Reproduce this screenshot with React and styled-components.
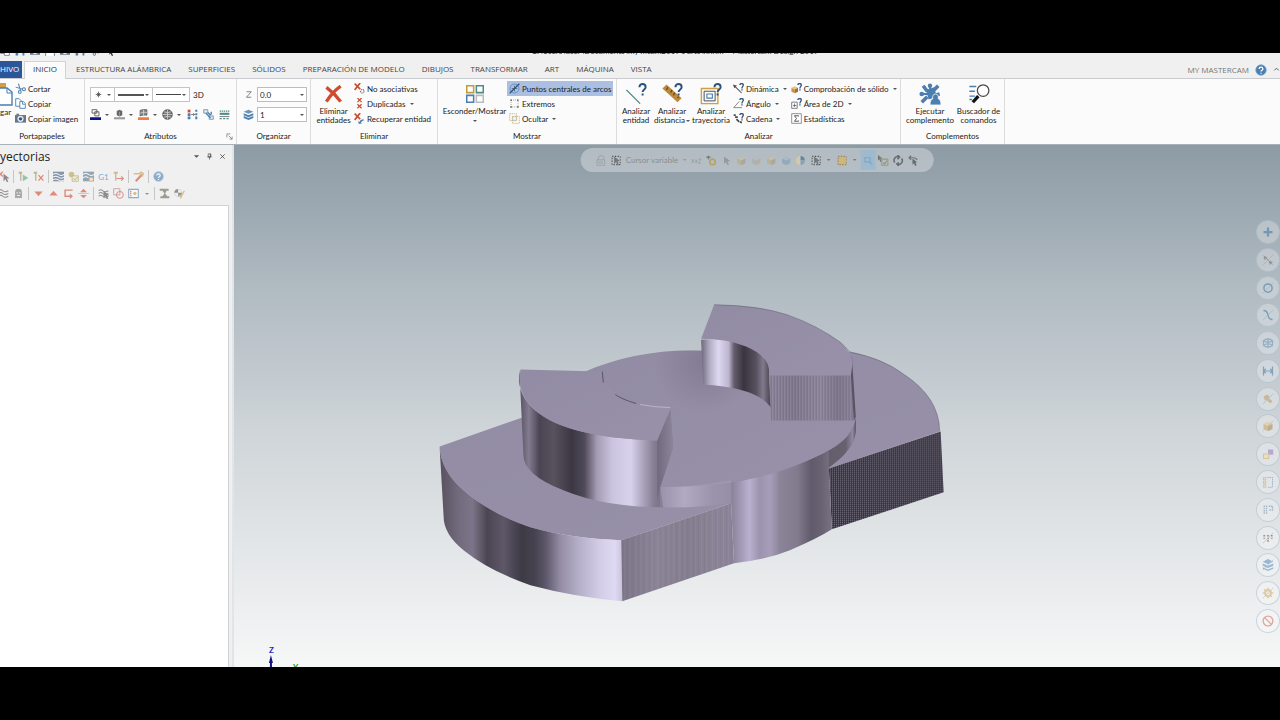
import React from 'react'
import styled, { createGlobalStyle } from 'styled-components'

const GlobalStyle = createGlobalStyle`
    * {
        box-sizing: border-box;
    }
    html, body {
        margin: 0;
        background: #000;
    }
    body, button, select {
        font-family: Lato, 'Open Sans', sans-serif;
        font-size: 8px;
        line-height: 10px;
        color: #222;
    }
    button {
        border: 0;
        padding: 0;
        margin: 0;
        background: none;
        white-space: nowrap;
    }
    svg {
        display: block;
        flex: none;
    }
`

const Screen = styled.div`
    display: flex;
    flex-direction: column;
    height: 100vh;
    padding: 53px 0;
    overflow: hidden;
`

const TitleBar = styled.header`
    position: relative;
    display: flex;
    justify-content: center;
    height: 8px;
    padding-left: 70px;
    background: #f0f0f0;
`

const TitleText = styled.div`
    display: flex;
    align-items: flex-end;
    height: 3px;
    overflow: hidden;
    white-space: pre;
`

const QuickAccess = styled.div`
    position: absolute;
    left: 0;
    top: 0;
    display: flex;
    align-items: flex-end;
    gap: 5px;
    height: 3px;
    overflow: hidden;
`

const TabBar = styled.nav`
    display: flex;
    align-items: stretch;
    height: 18px;
    background: #f0f0f0;
    border-bottom: 1px solid #c9cbcf;
`

const Tab = styled.button`
    margin-right: 1px;
    padding: 0 8px 1px;
    font-family: 'Open Sans', 'Noto Sans', sans-serif;
    color: #444;
`

const FileTab = styled(Tab)`
    width: 22px;
    margin-right: 2px;
    padding: 0 4px 1px 0;
    text-align: right;
    color: #fff;
    background: #2a579a;
`

const ActiveTab = styled(Tab)`
    margin: 0 2px -1px 0;
    padding-bottom: 3px;
    border: 1px solid #d0d2d6;
    border-bottom: 0;
    background: #fbfbfb;
    color: #333;
`

const TabTools = styled.div`
    display: flex;
    align-items: center;
    gap: 6px;
    margin-left: auto;
    font-family: 'Open Sans', 'Noto Sans', sans-serif;
    color: #777;
`

const RibbonBar = styled.div`
    display: flex;
    height: 66px;
    background: #fbfbfb;
    border-bottom: 1px solid #a9b1b9;
`

const Group = styled.section`
    display: flex;
    flex-direction: column;
    flex: 0 0 ${({ $width }) => $width}px;
    border-right: 1px solid #dcdcdc;
`

const GroupBody = styled.div`
    display: flex;
    flex: 1;
    padding: ${({ $pad }) => $pad || '2px 2px 0 4px'};
`

const GroupTitle = styled.div`
    position: relative;
    height: 13px;
    text-align: center;
`

const Launcher = styled.button`
    position: absolute;
    right: 3px;
    top: 2px;
`

const Column = styled.div`
    display: flex;
    flex-direction: column;
    align-items: flex-start;
`

const SmallButton = styled.button`
    display: flex;
    align-items: center;
    gap: 2px;
    height: 15px;
    padding: 0 2px;
    background: ${({ $active }) => $active ? '#aabfe2' : 'none'};
`

const BigButton = styled.button`
    display: flex;
    flex-direction: column;
    align-items: center;
    flex: 0 0 ${({ $width }) => $width}px;
    height: 46px;
    line-height: 9px;
`

const BigIcon = styled.span`
    display: flex;
    align-items: center;
    justify-content: center;
    height: 26px;
`

const BigLine = styled.span`
    display: flex;
    align-items: center;
    gap: 1px;
    min-height: 9px;
`

const StyleRow = styled.div`
    display: flex;
    align-items: center;
    height: 15px;
    margin-bottom: 7px;
`

const StyleBox = styled.button`
    display: flex;
    align-items: center;
    justify-content: space-between;
    width: ${({ $width }) => $width}px;
    height: 15px;
    margin-right: -1px;
    padding: 0 3px;
    border: 1px solid #c4c4c4;
    background: #fff;
`

const Swatches = styled.div`
    display: flex;
    align-items: center;
    justify-content: space-between;
    width: 140px;
`

const Swatch = styled.button`
    display: flex;
    align-items: center;
    gap: 4px;
`

const Field = styled.label`
    position: relative;
    display: flex;
    align-items: center;
    gap: 3px;
    margin-bottom: 5px;
`

const Select = styled.select`
    appearance: none;
    width: 50px;
    height: 15px;
    padding: 0 2px;
    border: 1px solid #bdbdbd;
    border-radius: 0;
    background: #fff;
`

const FieldCaret = styled.span`
    position: absolute;
    right: 3px;
`

const Workspace = styled.main`
    display: flex;
    flex: 1;
    min-height: 0;
    background: #f0f0f0;
`

const Panel = styled.aside`
    display: flex;
    flex-direction: column;
    flex: 0 0 234px;
    border-right: 2px solid #e2e5e8;
`

const PanelHeader = styled.div`
    display: flex;
    align-items: center;
    height: 23px;
    padding-right: 6px;
    gap: 6px;
`

const PanelTitle = styled.h1`
    margin: 0 auto 0 0;
    font-family: 'Open Sans', 'Noto Sans', sans-serif;
    font-size: 12px;
    line-height: 16px;
    font-weight: 400;
`

const PanelTools = styled.div`
    display: flex;
    align-items: center;
    height: 17px;
    margin-left: -4px;
    opacity: 0.6;
`

const ToolButton = styled.button`
    display: flex;
    align-items: center;
    justify-content: center;
    width: ${({ $slim }) => $slim ? 11 : 15}px;
    height: ${({ $active }) => $active ? 20 : 14}px;
    background: ${({ $active }) => $active ? '#8fb9d6' : 'none'};
`

const Divider = styled.span`
    width: 1px;
    height: 13px;
    margin: 0 2px;
    background: #aaa;
`

const TreeView = styled.div`
    flex: 1;
    margin: 3px 3px 0 0;
    border: 1px solid #cfd3d6;
    border-left: 0;
    border-bottom: 0;
    background: #fff;
`

const Viewport = styled.section`
    position: relative;
    flex: 1;
    min-width: 0;
    overflow: hidden;
    background: linear-gradient(#8d9ba5 0%, #b1bbc2 28%, #cdd3d7 53%, #e4e7e9 78%, #f6f7f7 100%);
`

const Scene = styled.svg`
    width: 100%;
    height: 100%;
`

const SelectionBar = styled.div`
    position: absolute;
    top: 3px;
    left: 50%;
    display: flex;
    align-items: center;
    height: 24px;
    padding: 0 13px;
    border-radius: 12px;
    background: rgba(255, 255, 255, 0.32);
    transform: translateX(-50%);
`

const SelectionTools = styled.div`
    display: flex;
    align-items: center;
    opacity: ${({ $faded }) => $faded ? 0.3 : 0.6};
`

const QuickMasks = styled.div`
    position: absolute;
    top: 75px;
    right: 0;
    bottom: 34px;
    display: flex;
    flex-direction: column;
    justify-content: space-between;
`

const MaskButton = styled.button`
    display: flex;
    align-items: center;
    justify-content: center;
    width: 24px;
    height: 24px;
    border: 1px solid rgba(150, 175, 192, 0.45);
    border-radius: 12px;
    background: rgba(255, 255, 255, 0.28);
    & > svg {
        opacity: 0.45;
    }
`

const BLUE = '#4a7fb0'
const RED = '#cf4b2f'
const GOLD = '#d0a040'
const DARK = '#4a4a4a'
const TEAL = '#4e8a86'

const cursor = <path d="M5 2v11l3-3 2 5 2-1-2-5h4z" fill={DARK} />
const question = (
    <g fill="none" stroke="#35577f" strokeWidth="2">
        <path d="M10 3c0-3 5-3 5 0 0 2-2 2-2 5" />
        <path d="M13 9v2" />
    </g>
)
const bigQuestion = <path d="M10.500 3c0-3 4.500-3 4.500 0 0 1.700-2.200 1.700-2.200 3.600M12.800 7.600v1.400" fill="none" stroke="#2d4f7d" strokeWidth="1.400" />
const slash = <path d="M1 15 15 1" stroke="#8593a0" />
const cube = (
    <g>
        <path d="M2 5l6-3 6 3-6 3z" fill="#e8c27a" />
        <path d="M2 5l6 3v7l-6-3z" fill="#c69443" />
        <path d="M14 5l-6 3v7l6-3z" fill="#9f7130" />
    </g>
)
const waves = <path d="M1 4q3-3 6 0t8 0M1 8q3-3 6 0t8 0M1 12q3-3 6 0t8 0" fill="none" stroke={DARK} strokeWidth="1.5" />

const shapes = {
    cut: <g fill="none" stroke={BLUE} strokeWidth="1.5"><circle cx="13" cy="9" r="2.2" /><circle cx="7" cy="13" r="2" /><path d="M11 9 1 6M8 11 5 1" /></g>,
    copy: <g fill="#fff" stroke={BLUE} strokeWidth="1.3"><path d="M1 1h5l3 3v8H1z" /><path d="M7 5h5l3 3v7H7z" /><path d="M11 5v4h4" /></g>,
    camera: <g><path d="M0 3h16v11H0z" fill="#66758a" /><path d="M2 1h4v2H2z" fill="#777" /><circle cx="8" cy="8.5" r="4.5" fill="#dfe8f0" /><circle cx="8" cy="8.5" r="2.5" fill="#34587e" /></g>,
    paste: <g><path d="M0 0h9v5H0z" fill={GOLD} /><path d="M1 5h9l5 4v13H1z" fill="#fff" stroke={BLUE} strokeWidth="1.4" /><path d="M10 5v5h5" fill="none" stroke={BLUE} /></g>,
    plus: <path d="M8 3v10M3 8h10M5 5l6 6M11 5l-6 6" stroke="#333" strokeWidth="1.2" />,
    wire: <g><path d="M3 1h7v5H3zM7 4h6v6H7z" fill="#fff" stroke={DARK} strokeWidth="1.2" /><path d="M0 12h16v4H0z" fill="#10108a" /></g>,
    solid: <g><path d="M4 3l4-2 4 2v6l-4 2-4-2z" fill="#666" /><path d="M8 4v7" stroke="#aaa" /><path d="M0 12h16v3H0z" fill="#999" /></g>,
    surface: <g><path d="M3 2q4-2 10-1v8q-6-1-10 1z" fill="#888" stroke="#555" /><path d="M3 6q4-2 10-1M8 1v8" stroke="#ddd" fill="none" /><path d="M0 12h16v4H0z" fill="#ec7c4a" /></g>,
    sphere: <g><circle cx="8" cy="8" r="7" fill="#777" stroke="#333" /><path d="M1 8h14M8 1v14M3 4q5 3 10 0M3 12q5-3 10 0" fill="none" stroke="#ddd" /></g>,
    levels: <g><path d="M1 1h4v4H1z" fill={RED} /><path d="M1 6h4v4H1zM1 11h4v4H1zM12 1h3v3h-3zM12 6h3v3h-3zM12 11h3v4h-3z" fill={BLUE} /><path d="M6 8h5M9 6l2 2-2 2" stroke={DARK} fill="none" /></g>,
    swap: <g><path d="M1 1h6v5H1zM9 10h6v5H9z" fill="#dfe9f3" stroke={BLUE} /><path d="M4 6l7 7M12 4v4M7 5l4 4" stroke={BLUE} strokeWidth="2" /></g>,
    lines: <g stroke={TEAL}><path d="M1 3h14" strokeDasharray="2 1" strokeWidth="2" /><path d="M1 7h14" strokeWidth="3" /><path d="M1 11h14" stroke={DARK} /><path d="M1 14h14" strokeDasharray="3 2" strokeWidth="2" /></g>,
    launcher: <path d="M2 10V2h8M6 6l8 8M14 8v6H8" fill="none" stroke="#666" strokeWidth="1.5" />,
    zed: <path d="M5 4h7l-7 8h7" fill="none" stroke="#777" strokeWidth="1.3" />,
    layers: <g><path d="M8 1l7 3-7 3-7-3z" fill="#6b94bd" /><path d="M1 6l7 3 7-3v3l-7 3-7-3zM1 10l7 3 7-3v3l-7 3-7-3z" fill={BLUE} /></g>,
    bigX: <path d="M2 2q7 5 12 12M14 1Q7 6 2 14" fill="none" stroke={RED} strokeWidth="2.8" />,
    delGear: <g><path d="M1 1l8 8M9 0L1 10" stroke={RED} strokeWidth="2.4" /><circle cx="12" cy="12" r="2.6" fill="none" stroke="#777" strokeWidth="1.6" strokeDasharray="2 1" /></g>,
    delTwice: <path d="M5 0l6 6M11 0L5 6M5 9l6 6M11 9l-6 6" stroke={RED} strokeWidth="1.8" />,
    undel: <g><path d="M1 1l8 8M9 0L1 10" stroke={RED} strokeWidth="2.4" /><path d="M14 9q-5 0-6 4l-2-1 1 4 5-1-2-1q1-2 4-3z" fill={BLUE} /></g>,
    fourBoxes: <g fill="#fff" strokeWidth="1.1"><path d="M2 2h5v5H2z" stroke="#c39a3c" /><path d="M9 2h5v5H9z" stroke={TEAL} /><path d="M2 9h5v5H2z" stroke={BLUE} /><path d="M9 9h5v5H9z" stroke="#bbb" /></g>,
    arcCenter: <g fill="none" stroke="#32506e"><circle cx="8" cy="8" r="6.5" stroke={BLUE} /><path d="M1 15 15 1" strokeWidth="1.800" /><path d="M8 4v8M4 8h8" /></g>,
    ends: <g><path d="M3 3h10v10H3z" fill="none" stroke={DARK} strokeDasharray="1 2" /><path d="M2 2h2v2H2zM12 2h2v2h-2zM2 12h2v2H2zM12 12h2v2h-2z" fill={DARK} /></g>,
    hide: <g fill="none" stroke={GOLD} strokeDasharray="2 1"><path d="M1 1h10v10H1z" /><path d="M5 5h10v10H5z" /><path d="M5 5h6v6H5z" fill="#eee" stroke="#8aa" /></g>,
    entity: <g><path d="M1 5l10 10" stroke={TEAL} strokeWidth="1" />{bigQuestion}</g>,
    ruler: <g><path d="M1 4l3-3 11 10-3 3z" fill="#bb8a3e" /><path d="M5 3L4 5M8 5L7 7M10 7L9 9M13 10l-1 1" stroke="#6d4e1d" />{bigQuestion}</g>,
    contour: <g fill="none"><path d="M1 4h12v11H1z" stroke={GOLD} /><path d="M3 6h8v7H3z" stroke={DARK} strokeWidth=".7" /><path d="M5 8h4v3H5z" stroke={BLUE} strokeWidth=".8" />{bigQuestion}</g>,
    dynamic: <g><path d="M0 2l6 2-2 1 9 9-1 1-9-9-1 2z" fill={DARK} />{question}</g>,
    angle: <g><path d="M9 5L1 14h12" fill="none" stroke="#777" strokeWidth="1.200" />{question}</g>,
    chain: <g><path d="M1 3l3 0M3 6l4 0M5 9l4 4M10 13l3 1" stroke={DARK} strokeWidth="2.500" fill="none" />{question}</g>,
    solidCheck: <g><g transform="translate(-1 3) scale(.8)">{cube}</g>{question}</g>,
    area: <g><path d="M1 6h8v9H1z" fill="#fff" stroke={DARK} /><path d="M5 8v5M3 11h5" stroke={DARK} />{question}</g>,
    sigma: <g><path d="M1 1h14v14H1z" fill="#fff" stroke="#567" /><path d="M11 5V4H5l3 4-3 4h6v-1" fill="none" stroke={DARK} strokeWidth="1.300" /></g>,
    puzzle: (
        <g fill={BLUE}>
            <path d="M5 5l6-2 2 7-6 2z" />
            <path d="M6 6L3 2M11 5l3-3M6 10l-4 4M11 9l4-1" stroke={BLUE} strokeWidth="2.600" />
            <circle cx="8" cy="2" r="1.600" />
            <circle cx="2" cy="8" r="1.700" />
            <path d="M2 7.300h5v1.400H2zM7.300 2h1.400v4H7.300z" />
            <path d="M8 16q0-4 2-4.500Q9.500 8 12 8t2 3.500q2 .500 2 4.500z" stroke="#fbfbfb" strokeWidth=".6" />
        </g>
    ),
    finder: <g><circle cx="11" cy="5.500" r="4.200" fill="#fff" stroke={DARK} strokeWidth=".9" /><path d="M7.500 9.500L3.500 14" stroke="#111" strokeWidth="2.400" /><path d="M1 2.500h5M1 6h4M1 9.500h4M1 12h2" stroke={BLUE} /></g>,
    help: <g><circle cx="8" cy="8" r="7" fill={BLUE} stroke="#7fa3c7" /><path d="M5.500 6.500c0-3 5-3 5 0 0 2-2.500 1.500-2.500 3.500M8 11.500v1.500" fill="none" stroke="#fff" strokeWidth="1.700" /></g>,
    up: <path d="M3 10l5-5 5 5" fill="none" stroke={DARK} strokeWidth="2" />,
    menu: <path d="M2 5h12l-6 6z" fill="#555" />,
    pin: <path d="M5 2h6v7H5zM3 9h10M8 9v6M10 2v7" fill="none" stroke="#444" strokeWidth="1.500" />,
    close: <path d="M3 3l10 10M13 3L3 13" stroke="#444" strokeWidth="1.800" />,
    deselect: <g><path d="M0 1l7 7M7 1L0 8" stroke={RED} strokeWidth="2" /><g transform="translate(3 2)">{cursor}</g></g>,
    toolPlay: <g><path d="M1 1h5v3H5v10H3V4H1z" fill="#999164" /><path d="M7 5l8 5-8 5z" fill="#58a77a" /></g>,
    toolX: <g><path d="M1 1h5v3H5v10H3V4H1z" fill="#999164" /><path d="M8 6l7 8M15 6l-7 8" stroke={RED} strokeWidth="2" /></g>,
    waveFill: <g><path d="M0 1h16v14H0z" fill="#3e5d7c" /><path d="M0 5q4-3 8 0t8 0M0 9q4-3 8 0t8 0M0 13q4-3 8 0t8 0" fill="none" stroke="#fff" strokeWidth="1.500" /></g>,
    regen: <g><circle cx="5" cy="5" r="4" fill="#b1a24a" /><path d="M6 7h9v8H6z" fill="#eee6bd" stroke="#8c8140" /><path d="M8 11l2 2 4-4" fill="none" stroke="#6c6130" /></g>,
    waveGear: <g><path d="M0 1h16v14H0z" fill="#56728d" /><path d="M0 5q4-3 8 0t8 0M0 10q4-3 8 0" fill="none" stroke="#fff" strokeWidth="1.500" /><circle cx="12" cy="12" r="3" fill="#f0e0bb" stroke="#c58b3c" /></g>,
    feed: <g><path d="M1 1h6v3H5v10H3V4H1z" fill="#b0984a" /><path d="M5 11h10M12 8l3 3-3 3" fill="none" stroke={RED} strokeWidth="1.600" /></g>,
    wand: <g><path d="M4 15L13 5" stroke={RED} strokeWidth="3" /><path d="M1 4h8l3-2 3 2-2 4" fill="none" stroke={GOLD} strokeWidth="2.500" /></g>,
    waves,
    ghost: <g><path d="M3 15V6q0-5 5-5t5 5v9l-2-1-1 1-2-1-2 1-1-1z" fill="#777" /><path d="M6 6v2M10 6v2M6 11h4" stroke="#fff" strokeWidth="1.400" /></g>,
    down: <path d="M2 5h12l-6 7z" fill={RED} />,
    upFill: <path d="M2 11h12L8 4z" fill={RED} />,
    loop: <path d="M14 3H3v9h10M10 9l3 3-3 3" fill="none" stroke={RED} strokeWidth="2" />,
    split: <path d="M3 6h10L8 1zM3 10h10l-5 5zM0 7.500h16v1H0z" fill={RED} />,
    waveCursor: <g>{waves}<g transform="translate(3 2)">{cursor}</g></g>,
    overlap: <g fill="none"><path d="M1 1h9v9H1z" stroke="#a77" strokeWidth="1.400" /><circle cx="10" cy="10" r="5" stroke={RED} strokeWidth="1.400" /></g>,
    view: <g><path d="M1 2h14v12H1z" fill="#fff" stroke={BLUE} strokeWidth="1.500" /><path d="M3 5h2M3 8h2M3 11h2" stroke={RED} strokeWidth="2" /><circle cx="10" cy="8" r="2.500" fill={GOLD} /></g>,
    machine: <path d="M1 1h13v3h-3L9 8l3 4h3v3H2v-3h3l3-4-3-4H1z" fill="#665" />,
    verify: <g><circle cx="6" cy="7" r="5.500" fill="#555" /><path d="M6 1.500A5.500 5.500 0 0 1 11.500 7H6zM6 12.500A5.500 5.500 0 0 1 .5 7H6z" fill="#eee" /><path d="M8 10l2 4 5-10" fill="none" stroke={GOLD} strokeWidth="2" /></g>,
    lock: <g fill="none" stroke={DARK}><path d="M2 7h11v8H2z" /><path d="M4 7V4q0-3 4-3t4 3v2M5 9v4M7 9l3 4M10 9l-3 4" /></g>,
    select: <g><path d="M2 2h12v12H2z" fill="none" stroke="#222" strokeWidth="1.600" strokeDasharray="2 2" />{cursor}</g>,
    cursor,
    xyz: <path d="M1 6l4 6M5 6l-4 6M6 9h4M8 7v5M11 6h4l-4 6h4" fill="none" stroke={DARK} />,
    snap: <g><path d="M1 3h6M4 1v5" stroke={DARK} strokeWidth="1.800" /><circle cx="10" cy="10" r="4" fill="none" stroke="#b59628" strokeWidth="2.500" /></g>,
    cube,
    cubeGray: <g><path d="M2 5l6-3 6 3-6 3z" fill="#bbb" /><path d="M2 5l6 3v7l-6-3z" fill="#999" /><path d="M14 5l-6 3v7l6-3z" fill="#b98f5a" /></g>,
    cubeBlue: <g><path d="M2 5l6-3 6 3-6 3z" fill="#8ab5dc" /><path d="M2 5l6 3v7l-6-3zM14 5l-6 3v7l6-3z" fill={BLUE} /></g>,
    globe: <g><circle cx="7" cy="8" r="6.500" fill="#e9d38f" /><path d="M7 1.500a6.500 6.500 0 0 1 6.500 6.500H7z" fill="#2f62a0" /><path d="M7 8h6.500A6.500 6.500 0 0 1 7 14.500z" fill="#5b93c4" /></g>,
    grid: <path d="M2 2h12v12H2z" fill="#e2b24e" stroke="#7c642b" strokeWidth="1.600" strokeDasharray="2 2" />,
    chainSel: <g opacity=".6"><path d="M3 4h8v6H3z" fill="none" stroke={BLUE} strokeWidth="1.500" /><path d="M9 9l5 5" stroke={BLUE} strokeWidth="2" /></g>,
    pick: <g><g transform="translate(-4 -2) scale(.8)">{cursor}</g><path d="M6 6h9v9H6z" fill="none" stroke="#8b8340" strokeWidth="1.500" /><path d="M8 11l2 2 4-5" fill="none" stroke="#7a7338" strokeWidth="1.500" /></g>,
    cycle: <path d="M3 11A5.500 5.500 0 0 1 9 2.500M13 5a5.500 5.500 0 0 1-6 8.500M7 0l3 3-3 3M9 11l-3 2 3 3" fill="none" stroke="#333" strokeWidth="2.200" />,
    back: <g><path d="M2 4h6q4 0 6 3M5 1L2 4l3 3" fill="none" stroke="#444" strokeWidth="1.800" /><path d="M7 5v9l2-2 2 4 2-1-2-4h3z" fill="#333" /></g>,
    maskPlus: <path d="M8 2v12M2 8h12" stroke="#1c6397" strokeWidth="3" />,
    maskLine: <g><path d="M2 2l12 12" stroke={DARK} /><path d="M2 5h5M4 3v5M9 11h5M11 9v5" stroke={DARK} strokeWidth="1.500" />{slash}</g>,
    maskCircle: <g><circle cx="8" cy="8" r="5.500" fill="none" stroke="#1c6397" strokeWidth="2" />{slash}</g>,
    maskCurve: <g><path d="M2 2q5 0 6 6t6 6" fill="none" stroke="#1c6397" strokeWidth="2" />{slash}</g>,
    maskSurf: <g fill="none" stroke={BLUE} strokeWidth="1.600"><path d="M2 5q6-5 12 0v6q-6 5-12 0z" /><path d="M2 5q6 4 12 0M2 11q6-4 12 0M8 2v12" /></g>,
    maskDim: <path d="M2 2v12M14 2v12M2 8h12M5 5L2 8l3 3M11 5l3 3-3 3" fill="none" stroke="#1c6397" strokeWidth="1.600" />,
    maskBolt: <g><path d="M2 5l5-3 3 3-1 2 5 4-3 3-5-5-2 1z" fill="#b98c3d" />{slash}</g>,
    maskCube: <g>{cube}{slash}</g>,
    maskSquares: <g><path d="M8 2h7v7H8z" fill="#8565bd" /><path d="M2 8h7v6H2z" fill="#efdba8" stroke={GOLD} strokeWidth="1.400" /></g>,
    maskTree: <g fill="none" strokeWidth="1.400"><path d="M2 2h3v3H2zM2 7h3v3H2zM2 12h3v3H2z" stroke={GOLD} /><path d="M7 2h7v13H7" stroke={BLUE} strokeDasharray="2 1" /></g>,
    maskNamed: <path d="M3 2v12M6 2v12M9 3h5v5H9" fill="none" stroke="#5c7894" strokeWidth="1.800" strokeDasharray="2 1" />,
    maskDots: <g><path d="M3 4v5M8 4v9M13 4v5" stroke="#333" strokeWidth="2.500" strokeDasharray="2 1.500" />{slash}</g>,
    maskLayers: <g><path d="M8 0l7 3.500-7 3.500-7-3.500zM1 6l7 3 7-3v3l-7 3-7-3zM1 11l7 3 7-3v2l-7 3-7-3z" fill="#2f7ab5" />{slash}</g>,
    maskGear: <g><circle cx="8" cy="8" r="4" fill="none" stroke={GOLD} strokeWidth="3" /><path d="M8 1v14M1 8h14M3 3l10 10" stroke={GOLD} strokeDasharray="3 8" strokeWidth="2" />{slash}</g>,
    maskNone: <g fill="none" stroke={RED} strokeWidth="1.800"><circle cx="8" cy="8" r="6.500" /><path d="M3.500 3.500l9 9" /></g>,
}

function Icon({ name, size = 11 }) {
    return (
        <svg width={size} height={size} viewBox="0 0 16 16" aria-hidden="true">
            {shapes[name]}
        </svg>
    )
}

function Caret() {
    return (
        <svg width="4" height="2" viewBox="0 0 4 2" aria-hidden="true">
            <path d="M0 0h4L2 2z" fill="#555" />
        </svg>
    )
}

function Command({ icon, label, menu, active }) {
    return (
        <SmallButton $active={active}>
            <Icon name={icon} />
            {label}
            {menu && <><span /><Caret /></>}
        </SmallButton>
    )
}

function BigCommand({ icon, lines, width, menu, iconSize = 22 }) {
    return (
        <BigButton $width={width}>
            <BigIcon><Icon name={icon} size={iconSize} /></BigIcon>
            {lines.map((line, index) => (
                <BigLine key={index}>
                    {line}
                    {menu && index === lines.length - 1 && <Caret />}
                </BigLine>
            ))}
        </BigButton>
    )
}

const tabs = ['ESTRUCTURA ALÁMBRICA', 'SUPERFICIES', 'SÓLIDOS', 'PREPARACIÓN DE MODELO', 'DIBUJOS', 'TRANSFORMAR', 'ART', 'MÁQUINA', 'VISTA']

const swatches = [
    { icon: 'wire', menu: true },
    { icon: 'solid', menu: true },
    { icon: 'surface', menu: true },
    { icon: 'sphere', menu: true },
    { icon: 'levels' },
    { icon: 'swap' },
    { icon: 'lines' },
]

function Ribbon() {
    return (
        <RibbonBar>
            <Group $width={85}>
                <GroupBody $pad="2px 0 0">
                    <Column>
                        <svg width="13" height="26" viewBox="3 -2 13 26">{shapes.paste}</svg>
                        <BigLine>gar</BigLine>
                    </Column>
                    <Column>
                        <Command icon="cut" label="Cortar" />
                        <Command icon="copy" label="Copiar" />
                        <Command icon="camera" label="Copiar imagen" />
                    </Column>
                </GroupBody>
                <GroupTitle>Portapapeles</GroupTitle>
            </Group>
            <Group $width={152}>
                <GroupBody $pad="8px 5px 0">
                    <Column>
                        <StyleRow>
                            <StyleBox $width={25} aria-label="Estilo de punto"><Icon name="plus" size={9} /><Caret /></StyleBox>
                            <StyleBox $width={39} aria-label="Estilo de línea">
                                <svg width="26" height="2"><path d="M0 1h26" stroke="#555" strokeWidth="2" /></svg>
                                <Caret />
                            </StyleBox>
                            <StyleBox $width={38} aria-label="Grosor de línea">
                                <svg width="25" height="1"><path d="M0 .5h25" stroke="#444" /></svg>
                                <Caret />
                            </StyleBox>
                            <SmallButton>&nbsp;3D</SmallButton>
                        </StyleRow>
                        <Swatches>
                            {swatches.map(({ icon, menu }) => (
                                <Swatch key={icon} aria-label={icon}>
                                    <Icon name={icon} />
                                    {menu && <Caret />}
                                </Swatch>
                            ))}
                        </Swatches>
                    </Column>
                </GroupBody>
                <GroupTitle>
                    Atributos
                    <Launcher aria-label="Atributos"><Icon name="launcher" size={7} /></Launcher>
                </GroupTitle>
            </Group>
            <Group $width={74}>
                <GroupBody $pad="8px 3px 0 6px">
                    <Column>
                        <Field>
                            <Icon name="zed" />
                            <Select aria-label="Z"><option>0.0</option></Select>
                            <FieldCaret><Caret /></FieldCaret>
                        </Field>
                        <Field>
                            <Icon name="layers" />
                            <Select aria-label="Nivel"><option>1</option></Select>
                            <FieldCaret><Caret /></FieldCaret>
                        </Field>
                    </Column>
                </GroupBody>
                <GroupTitle>Organizar</GroupTitle>
            </Group>
            <Group $width={127}>
                <GroupBody>
                    <BigCommand icon="bigX" lines={['Eliminar', 'entidades']} width={37} iconSize={19} />
                    <Column>
                        <Command icon="delGear" label="No asociativas" />
                        <Command icon="delTwice" label="Duplicadas" menu />
                        <Command icon="undel" label="Recuperar entidad" />
                    </Column>
                </GroupBody>
                <GroupTitle>Eliminar</GroupTitle>
            </Group>
            <Group $width={179}>
                <GroupBody>
                    <BigCommand icon="fourBoxes" lines={['Esconder/Mostrar', '']} width={65} menu />
                    <Column>
                        <Command icon="arcCenter" label="Puntos centrales de arcos" active />
                        <Command icon="ends" label="Extremos" />
                        <Command icon="hide" label="Ocultar" menu />
                    </Column>
                </GroupBody>
                <GroupTitle>Mostrar</GroupTitle>
            </Group>
            <Group $width={284}>
                <GroupBody $pad="2px 0 0 2px">
                    <BigCommand icon="entity" lines={['Analizar', 'entidad']} width={34} />
                    <BigCommand icon="ruler" lines={['Analizar', 'distancia']} width={38} menu />
                    <BigCommand icon="contour" lines={['Analizar', 'trayectoria']} width={40} />
                    <Column>
                        <Command icon="dynamic" label="Dinámica" menu />
                        <Command icon="angle" label="Ángulo" menu />
                        <Command icon="chain" label="Cadena" menu />
                    </Column>
                    <Column>
                        <Command icon="solidCheck" label="Comprobación de sólido" menu />
                        <Command icon="area" label="Área de 2D" menu />
                        <Command icon="sigma" label="Estadísticas" />
                    </Column>
                </GroupBody>
                <GroupTitle>Analizar</GroupTitle>
            </Group>
            <Group $width={104}>
                <GroupBody>
                    <BigCommand icon="puzzle" lines={['Ejecutar', 'complemento']} width={50} />
                    <BigCommand icon="finder" lines={['Buscador de', 'comandos']} width={47} />
                </GroupBody>
                <GroupTitle>Complementos</GroupTitle>
            </Group>
        </RibbonBar>
    )
}

// '|' is a divider, 'v' a drop-down arrow, 'G1' is drawn as text
const panelRows = [
    ['deselect', '|', 'toolPlay', 'toolX', '|', 'waveFill', 'regen', 'waveGear', 'G1', 'feed', '|', 'wand', '|', 'help'],
    ['waves', 'ghost', '|', 'down', 'upFill', 'loop', 'split', '|', 'waveCursor', 'overlap', 'view', 'v', '|', 'machine', 'verify'],
]

const G1 = styled.span`
    color: #2b7ac4;
`

function renderTool(name, index) {
    if (name === '|') return <Divider key={index} />
    if (name === 'v') return <ToolButton $slim key={index} aria-label="Más"><Caret /></ToolButton>
    return (
        <ToolButton key={index} aria-label={name} $active={name === 'chainSel'}>
            {name === 'G1' ? <G1>G1</G1> : <Icon name={name} />}
        </ToolButton>
    )
}

function ToolpathPanel() {
    return (
        <Panel>
            <PanelHeader>
                <PanelTitle>yectorias</PanelTitle>
                <button aria-label="Menú"><Icon name="menu" size={7} /></button>
                <button aria-label="Fijar"><Icon name="pin" size={7} /></button>
                <button aria-label="Cerrar"><Icon name="close" size={7} /></button>
            </PanelHeader>
            {panelRows.map((row, index) => (
                <PanelTools key={index}>{row.map(renderTool)}</PanelTools>
            ))}
            <TreeView />
        </Panel>
    )
}

function Metal({ id, x1, x2, stops }) {
    return (
        <linearGradient id={id} gradientUnits="userSpaceOnUse" x1={x1} x2={x2} y1="0" y2="0">
            {stops.map(([offset, color]) => <stop key={offset} offset={offset} stopColor={color} />)}
        </linearGradient>
    )
}

const bossTop = 'M585 371Q634 350 690 350L852 352 856 412Q857 436 823 453 791 469 757 477 722 486 660 487L600 440z'

function Part() {
    return (
        <Scene viewBox="234 144 1046 523" role="img" aria-label="Pieza sólida">
            <defs>
                <Metal id="baseSide" x1="439" x2="622" stops={[[0, '#57505f'], [0.1, '#716a7c'], [0.18, '#7c7589'], [0.26, '#4b4553'], [0.35, '#5d5768'], [0.45, '#3e3a45'], [0.52, '#47424f'], [0.58, '#5c576a'], [0.66, '#938ca4'], [0.76, '#b5aec8'], [0.88, '#d3cde8'], [0.96, '#dfdaf4'], [1, '#c9c3dd']]} />
                <Metal id="wedgeSide" x1="519" x2="674" stops={[[0, '#565060'], [0.06, '#837c90'], [0.13, '#4a4553'], [0.22, '#58525f'], [0.34, '#3b3742'], [0.42, '#504a59'], [0.5, '#a29bb2'], [0.6, '#cbc4df'], [0.72, '#d8d2ed'], [0.8, '#aaa3bb'], [0.87, '#857e92'], [0.93, '#767083'], [1, '#827b8f']]} />
                <Metal id="wedgeEnd" x1="655" x2="673" stops={[[0, '#6c6679'], [1, '#8d869b']]} />
                <Metal id="flatSide" x1="621" x2="735" stops={[[0, '#7b7587'], [0.3, '#8b8496'], [0.6, '#857e8f'], [0.85, '#8b8498'], [1, '#8b8399']]} />
                <Metal id="diskSide" x1="660" x2="832" stops={[[0, '#9189a1'], [0.14, '#afa8c2'], [0.3, '#938ba3'], [0.42, '#8c849b'], [0.52, '#b9b1cf'], [0.58, '#9b94ad'], [0.64, '#a69eb8'], [0.7, '#8a8498'], [0.8, '#827b8e'], [0.88, '#605a6a'], [0.94, '#686272'], [1, '#797283']]} />
                <Metal id="rimSide" x1="829" x2="857" stops={[[0, '#635d6c'], [0.6, '#67606f'], [0.85, '#9089a0'], [1, '#48434f']]} />
                <Metal id="innerSide" x1="701" x2="770" stops={[[0, '#6e687b'], [0.12, '#b1abc2'], [0.25, '#ded7f2'], [0.4, '#bdb6ce'], [0.48, '#625c6c'], [0.62, '#39353f'], [0.8, '#57515f'], [0.9, '#817a8e'], [1, '#4d4755']]} />
                <Metal id="blockSide" x1="769" x2="855" stops={[[0, '#8a8399'], [0.3, '#7f788c'], [0.6, '#8d869b'], [0.8, '#7d768a'], [1, '#898299']]} />
                <linearGradient id="top" x1="0" y1="0" x2="1" y2="1">
                    <stop offset="0" stopColor="#928ba4" />
                    <stop offset="1" stopColor="#9891a9" />
                </linearGradient>
                <radialGradient id="shade" gradientUnits="userSpaceOnUse" cx="704" cy="362" r="50">
                    <stop offset="0" stopColor="#787087" stopOpacity="0.6" />
                    <stop offset="1" stopColor="#787087" stopOpacity="0" />
                </radialGradient>
                <pattern id="checker" width="2" height="2" patternUnits="userSpaceOnUse">
                    <rect width="2" height="2" fill="#322e38" />
                    <path d="M0 0h1v1H0z" fill="#8d8899" />
                </pattern>
                <pattern id="brush" width="11" height="800" patternUnits="userSpaceOnUse">
                    <path d="M.5 0v800M5.500 0v800" stroke="#5a5367" strokeOpacity=".1" />
                    <path d="M2.500 0v800M8.500 0v800" stroke="#d0c8e0" strokeOpacity=".08" />
                </pattern>
                <pattern id="ridges" width="3" height="800" patternUnits="userSpaceOnUse">
                    <path d="M.5 0v800" stroke="#5a5367" strokeOpacity=".22" />
                    <path d="M1.500 0v800" stroke="#d0c8e0" strokeOpacity=".12" />
                </pattern>
            </defs>

            {/* base plate */}
            <path d="M439 446 519 418 660 380 850 351Q883 358 903 373 940 397 940 431L829 468 731 503 621 540Q569 538 530 527 489 513 463 490 440 470 439 446z" fill="url(#top)" />
            <path d="M439 446Q440 470 463 490 489 513 530 527 569 538 621 540L622 601Q575 597 530 585 489 571 463 550 443 534 443 516z" fill="url(#baseSide)" />
            <path d="M621 540 731 503 734 563 622 601z" fill="url(#flatSide)" />
            <path d="M621 540 731 503 734 563 622 601z" fill="url(#brush)" />
            <path d="M829 468 941 431 944 492 832 529z" fill="url(#checker)" />

            {/* round boss */}
            <path d="M660 487Q725 486 757 477 793 468 823 453 856 437 856 414V430Q855 449 829 467L832 529Q818 538 790 550 765 560 734 563L731 503Q700 508 655 507z" fill="url(#diskSide)" />
            <path d="M829 450Q856 436 856 414V430Q855 449 829 467z" fill="url(#rimSide)" />
            <path d={bossTop} fill="url(#top)" />
            <path d={bossTop} fill="url(#shade)" />

            {/* front wedge */}
            <path d="M519 370Q516 391 530 405 558 437 657 440L670 407 673 447 660 487 663 507Q604 507 563 490 523 474 523 455z" fill="url(#wedgeSide)" />
            <path d="M657 440 670 407 673 447 660 487 657 500z" fill="url(#wedgeEnd)" />
            <path d="M660 487Q700 486 731 480V503Q700 508 660 507z" fill="#b4aec6" opacity=".25" />
            <path d="M520 369 602 371Q602 390 630 401 650 407 671 407L657 440Q558 437 530 405 516 391 520 369z" fill="url(#top)" />
            <path d="M602 371 603 382M615 394Q622 399 636 403" fill="none" stroke="#4c4655" strokeWidth=".8" />
            <path d="M640 404Q655 407 670 407" fill="none" stroke="#c4bdd2" strokeWidth=".8" />

            {/* rear wedge */}
            <path d="M701 339Q769 338 769 370L771 407Q757 387 703 384z" fill="url(#innerSide)" />
            <path d="M769 374H852L855 420H771z" fill="url(#blockSide)" />
            <path d="M769 374H852L855 420H771z" fill="url(#ridges)" />
            <path d="M852 355 856 416 854 420 851 374z" fill="#5a5462" />
            <path d="M714 304Q757 304 787 314 818 325 841 342 855 355 852 368L851 375H769Q772 357 746 346 728 338 701 338z" fill="url(#top)" />
            <path d="M714 304Q760 305 787 314 818 325 841 342L852 353M852 352Q883 358 903 373 940 397 940 431" fill="none" stroke="#625b70" strokeWidth=".5" />

            {/* gnomon */}
            <text x="268" y="653" fontSize="8" fontWeight="700" fill="#2525c8">Z</text>
            <path d="M270 655l2 8h-4zM269 660h2v8h-2z" fill="#11117c" />
            <text x="292" y="670" fontSize="8" fontWeight="700" fill="#239a23">Y</text>
        </Scene>
    )
}

const masks = ['maskPlus', 'maskLine', 'maskCircle', 'maskCurve', 'maskSurf', 'maskDim', 'maskBolt', 'maskCube', 'maskSquares', 'maskTree', 'maskNamed', 'maskDots', 'maskLayers', 'maskGear', 'maskNone']

function GraphicsView() {
    return (
        <Viewport>
            <Part />
            <SelectionBar>
                <SelectionTools $faded>{['lock'].map(renderTool)}</SelectionTools>
                <SelectionTools>{['select'].map(renderTool)}</SelectionTools>
                <SelectionTools $faded>
                    <SmallButton>Cursor variable <span /><Caret /></SmallButton>
                    {['xyz'].map(renderTool)}
                </SelectionTools>
                <SelectionTools>{['snap'].map(renderTool)}</SelectionTools>
                <SelectionTools $faded>{['cursor', 'cube', 'cubeGray', 'cube', 'cubeBlue'].map(renderTool)}</SelectionTools>
                <SelectionTools>{['globe', 'select', 'v', 'grid', 'v', 'chainSel', 'pick', 'cycle', 'back'].map(renderTool)}</SelectionTools>
            </SelectionBar>
            <QuickMasks>
                {masks.map(name => (
                    <MaskButton key={name} aria-label={name}><Icon name={name} size={12} /></MaskButton>
                ))}
            </QuickMasks>
        </Viewport>
    )
}

export default function App() {
    return (
        <Screen>
            <GlobalStyle />
            <TitleBar>
                <QuickAccess>
                    {['copy', 'levels', 'camera', 'paste', 'camera', 'levels', 'cut', 'back'].map((name, index) => <Icon key={index} name={name} size={10} />)}
                </QuickAccess>
                <TitleText>C:\Users\user\Documents\my mcam2019's arts\hhhm  - Mastercam Design 2019</TitleText>
            </TitleBar>
            <TabBar>
                <FileTab>HIVO</FileTab>
                <ActiveTab>INICIO</ActiveTab>
                {tabs.map(tab => <Tab key={tab}>{tab}</Tab>)}
                <TabTools>
                    MY MASTERCAM
                    <button aria-label="Ayuda"><Icon name="help" size={12} /></button>
                    <button aria-label="Contraer"><Icon name="up" size={7} /></button>
                </TabTools>
            </TabBar>
            <Ribbon />
            <Workspace>
                <ToolpathPanel />
                <GraphicsView />
            </Workspace>
        </Screen>
    )
}
